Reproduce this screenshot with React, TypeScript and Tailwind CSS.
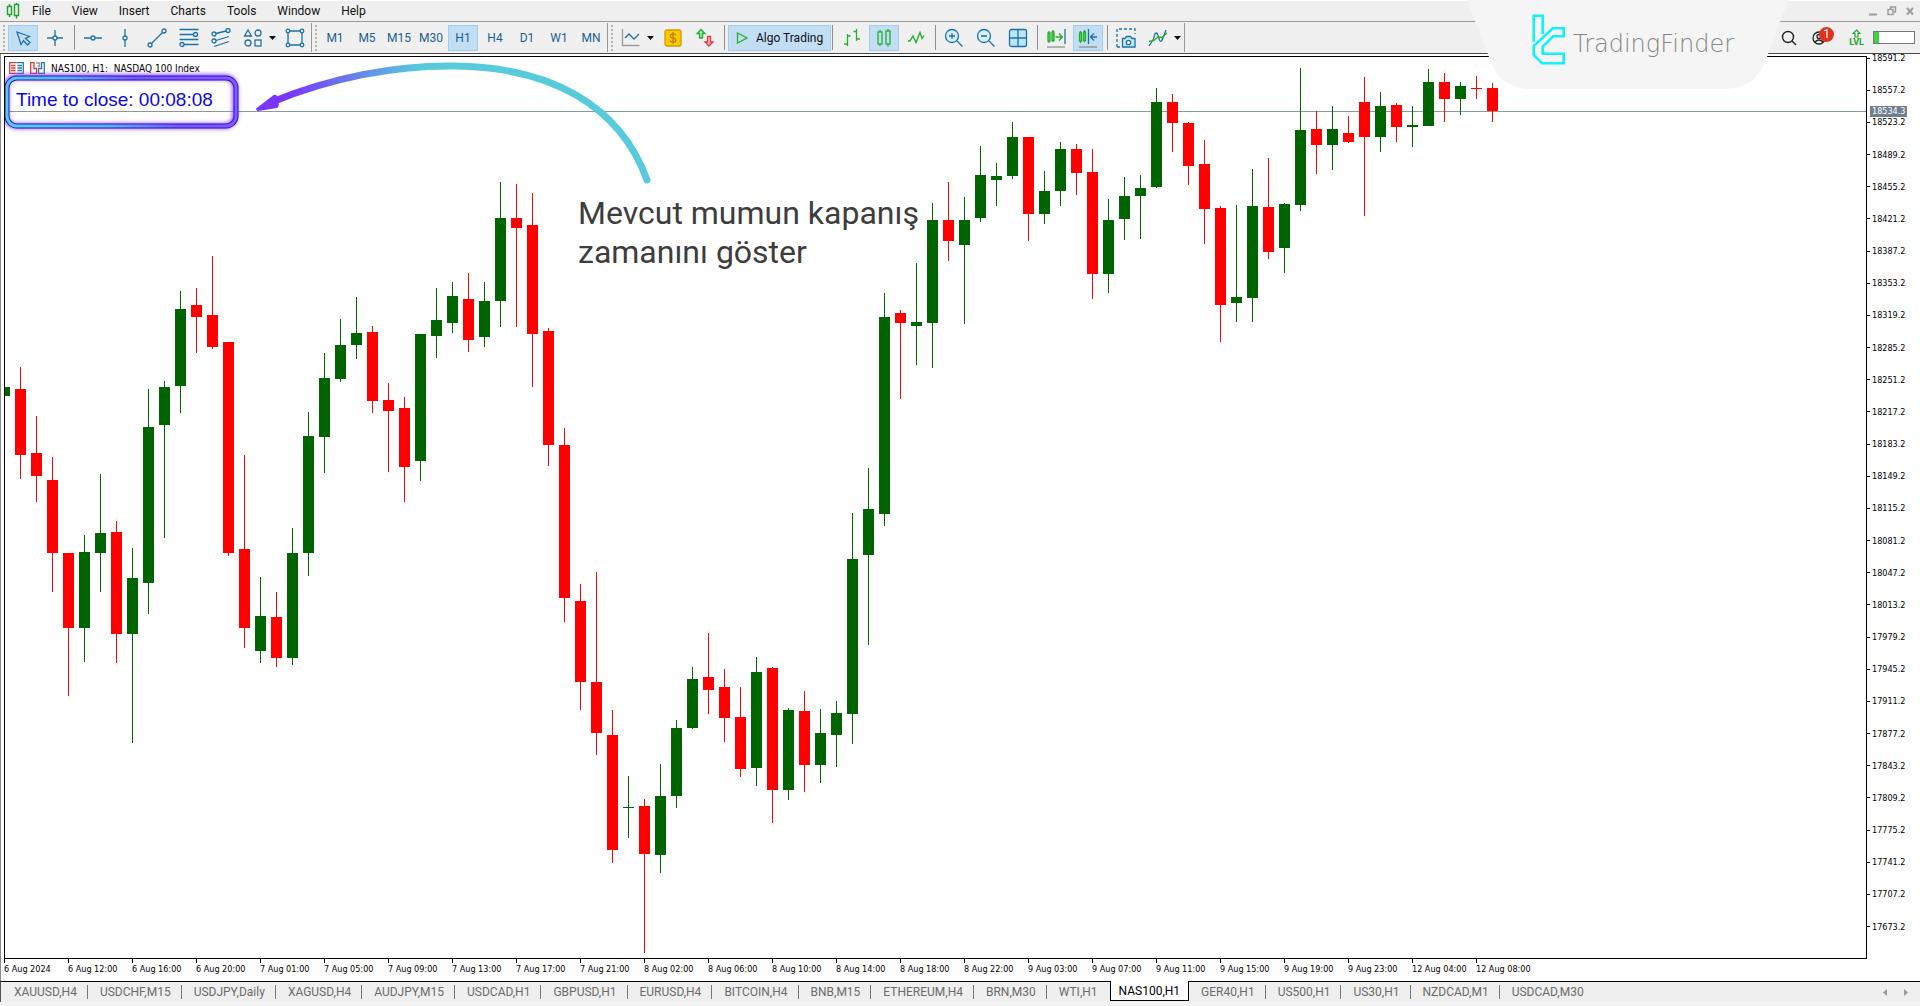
import React, { useState } from 'react';
import clsx from 'clsx';

type Candle = [number, number, number, number, 'up' | 'down'];

// [high, body top, body bottom, low, direction]
const candles: Candle[] = [
  [387, 387, 396, 396, 'up'],
  [367, 389, 455, 479, 'down'],
  [416, 453, 476, 502, 'down'],
  [457, 480, 553, 592, 'down'],
  [553, 553, 628, 696, 'down'],
  [535, 552, 628, 662, 'up'],
  [474, 533, 553, 592, 'up'],
  [521, 532, 634, 663, 'down'],
  [548, 578, 634, 743, 'up'],
  [389, 427, 583, 614, 'up'],
  [381, 387, 425, 538, 'up'],
  [291, 309, 386, 413, 'up'],
  [288, 305, 317, 353, 'down'],
  [256, 315, 347, 349, 'down'],
  [342, 342, 553, 556, 'down'],
  [455, 549, 628, 648, 'down'],
  [577, 616, 651, 663, 'up'],
  [592, 617, 658, 667, 'down'],
  [528, 553, 658, 665, 'up'],
  [412, 436, 553, 576, 'up'],
  [353, 378, 437, 473, 'up'],
  [319, 345, 379, 382, 'up'],
  [297, 333, 345, 359, 'up'],
  [326, 332, 401, 413, 'down'],
  [383, 400, 411, 472, 'down'],
  [397, 408, 467, 502, 'down'],
  [334, 334, 461, 481, 'up'],
  [288, 320, 336, 358, 'up'],
  [282, 296, 323, 333, 'up'],
  [273, 299, 340, 352, 'down'],
  [282, 301, 337, 347, 'up'],
  [182, 218, 301, 327, 'up'],
  [184, 218, 228, 327, 'down'],
  [193, 225, 334, 387, 'down'],
  [328, 331, 445, 466, 'down'],
  [428, 445, 598, 622, 'down'],
  [584, 601, 682, 710, 'down'],
  [572, 682, 733, 755, 'down'],
  [710, 735, 850, 863, 'down'],
  [776, 807, 808, 838, 'up'],
  [799, 806, 854, 953, 'down'],
  [764, 796, 855, 873, 'up'],
  [720, 728, 796, 808, 'up'],
  [667, 679, 728, 729, 'up'],
  [633, 677, 690, 714, 'down'],
  [669, 687, 718, 742, 'down'],
  [687, 717, 769, 777, 'down'],
  [657, 672, 768, 786, 'up'],
  [667, 668, 790, 823, 'down'],
  [708, 710, 790, 800, 'up'],
  [691, 711, 765, 792, 'down'],
  [709, 733, 765, 783, 'up'],
  [701, 713, 735, 767, 'up'],
  [513, 559, 714, 744, 'up'],
  [468, 509, 555, 645, 'up'],
  [293, 317, 514, 526, 'up'],
  [310, 313, 323, 399, 'down'],
  [263, 322, 326, 365, 'up'],
  [203, 220, 323, 368, 'up'],
  [182, 220, 241, 261, 'down'],
  [197, 220, 245, 324, 'up'],
  [146, 175, 218, 222, 'up'],
  [163, 176, 180, 206, 'up'],
  [122, 137, 176, 179, 'up'],
  [137, 137, 214, 241, 'down'],
  [171, 191, 214, 224, 'up'],
  [142, 149, 191, 206, 'up'],
  [144, 149, 173, 195, 'down'],
  [149, 172, 274, 299, 'down'],
  [199, 220, 274, 293, 'up'],
  [177, 196, 219, 240, 'up'],
  [175, 188, 196, 239, 'up'],
  [88, 102, 187, 188, 'up'],
  [94, 102, 123, 152, 'down'],
  [122, 123, 166, 185, 'down'],
  [140, 164, 209, 244, 'down'],
  [206, 208, 305, 342, 'down'],
  [205, 297, 303, 322, 'up'],
  [169, 206, 298, 322, 'up'],
  [158, 207, 252, 259, 'down'],
  [203, 204, 248, 273, 'up'],
  [68, 130, 205, 211, 'up'],
  [111, 129, 145, 174, 'down'],
  [106, 129, 145, 170, 'up'],
  [116, 133, 142, 143, 'down'],
  [77, 102, 137, 216, 'down'],
  [92, 106, 137, 152, 'up'],
  [103, 105, 127, 142, 'down'],
  [106, 125, 127, 147, 'up'],
  [69, 82, 126, 126, 'up'],
  [73, 82, 99, 122, 'down'],
  [82, 86, 99, 115, 'up'],
  [76, 88, 89, 99, 'down'],
  [83, 88, 111, 122, 'down'],
];

const CANDLE_STEP = 16;

const prices = Array.from({ length: 28 }, (_, i) => (18591.2 - i * 34).toFixed(1));

const times = [
  '6 Aug 2024', '6 Aug 12:00', '6 Aug 16:00', '6 Aug 20:00',
  '7 Aug 01:00', '7 Aug 05:00', '7 Aug 09:00', '7 Aug 13:00', '7 Aug 17:00', '7 Aug 21:00',
  '8 Aug 02:00', '8 Aug 06:00', '8 Aug 10:00', '8 Aug 14:00', '8 Aug 18:00', '8 Aug 22:00',
  '9 Aug 03:00', '9 Aug 07:00', '9 Aug 11:00', '9 Aug 15:00', '9 Aug 19:00', '9 Aug 23:00',
  '12 Aug 04:00', '12 Aug 08:00',
];

const menus = ['File', 'View', 'Insert', 'Charts', 'Tools', 'Window', 'Help'];
const timeframes = ['M1', 'M5', 'M15', 'M30', 'H1', 'H4', 'D1', 'W1', 'MN'];

const symbols = [
  'XAUUSD,H4', 'USDCHF,M15', 'USDJPY,Daily', 'XAGUSD,H4', 'AUDJPY,M15', 'USDCAD,H1', 'GBPUSD,H1',
  'EURUSD,H4', 'BITCOIN,H4', 'BNB,M15', 'ETHEREUM,H4', 'BRN,M30', 'WTI,H1', 'NAS100,H1',
  'GER40,H1', 'US500,H1', 'US30,H1', 'NZDCAD,M1', 'USDCAD,M30',
];

const BLUE = '#1d71a8';
const GREEN = '#22b02e';

const Icon: React.FC<{ children: React.ReactNode; color?: string }> = ({ children, color = BLUE }) => (
  <svg width="20" height="20" viewBox="0 0 20 20" fill="none" stroke={color} strokeWidth="1.3" aria-hidden="true">
    {children}
  </svg>
);

const Tool: React.FC<{ label: string; active?: boolean; children: React.ReactNode }> = ({ label, active, children }) => (
  <button
    type="button"
    aria-label={label}
    className={clsx(
      'mx-px flex h-[26px] w-[30px] shrink-0 items-center justify-center border',
      active ? 'border-[#a5cdee] bg-[#c2def5]' : 'border-transparent hover:bg-[#dcebf8]'
    )}
  >
    {children}
  </button>
);

const Caret = ({ label }: { label: string }) => (
  <button type="button" aria-label={label} className="flex h-[26px] w-[10px] shrink-0 items-center">
    <svg width="8" height="4" viewBox="0 0 8 4" aria-hidden="true">
      <path d="M0 0H7L3.5 4Z" fill="#111" />
    </svg>
  </button>
);

const Separator = () => (
  <span className="flex w-[6px] shrink-0 justify-center">
    <span className="h-[25px] w-px bg-[#8f8f8f]" />
  </span>
);

const Grip = () => (
  <span className="flex h-full w-[7px] shrink-0 items-center justify-center">
    <span className="h-[26px] border-l-2 border-dotted border-[#b5b5b5]" />
  </span>
);

const MenuBar = () => (
  <header className="flex h-[22px] items-center border-t border-b border-t-white border-b-[#9b9b9b] bg-[#efefef] pl-[6px] text-[12px] text-[#111]">
    <svg width="14" height="16" viewBox="0 0 14 16" fill="none" stroke="#17a62b" strokeWidth="1.4" aria-hidden="true">
      <path d="M3.5 1v2.500M3.500 11.500v2.500M10.500 0v1.500M10.500 12.500v3" />
      <rect x="1.500" y="3.500" width="4" height="8" />
      <rect x="8.500" y="1.500" width="4" height="11" />
    </svg>
    <nav className="ml-[2px] flex flex-1 gap-px">
      {menus.map((menu) => (
        <button key={menu} type="button" className="px-[10px] leading-[16px]">
          {menu}
        </button>
      ))}
    </nav>
    <div className="flex items-center gap-[9px] pr-[6px] text-[#9c9c9c]">
      <button type="button" aria-label="Minimize">
        <svg width="10" height="10" viewBox="0 0 10 10"><path d="M1 8.500H9" stroke="currentColor" strokeWidth="2" /></svg>
      </button>
      <button type="button" aria-label="Restore">
        <svg width="10" height="10" viewBox="0 0 10 10" fill="none" stroke="currentColor" strokeWidth="1.400">
          <rect x="1" y="3.500" width="5" height="5" />
          <path d="M3.500 3V1H8.500V6H6.500" />
        </svg>
      </button>
      <button type="button" aria-label="Close">
        <svg width="8" height="10" viewBox="0 0 8 10"><path d="M1 2l6 6.500M7 2L1 8.500" stroke="currentColor" strokeWidth="2" /></svg>
      </button>
    </div>
  </header>
);

const Toolbar = () => {
  const [timeframe, setTimeframe] = useState('H1');

  return (
    <div className="flex h-[32px] items-center border-b border-[#4a4a4a] bg-[#f0f0f0] text-[12px]">
      <Grip />
      <Tool label="Cursor" active>
        <Icon><path d="M4 4L8 16.500L10.500 12.500L14.500 17L17 14.500L12.500 10.500L16.500 8.500Z" /></Icon>
      </Tool>
      <Tool label="Crosshair">
        <Icon><path d="M10 2V8M10 12V18M2 10H8M12 10H18" /><circle cx="10" cy="10" r="2" /></Icon>
      </Tool>
      <Separator />
      <Tool label="Horizontal line">
        <Icon><path d="M1 10H8M12 10H19" /><circle cx="10" cy="10" r="2" /></Icon>
      </Tool>
      <Tool label="Vertical line">
        <Icon><path d="M10 1V8M10 12V19" /><circle cx="10" cy="10" r="2" /></Icon>
      </Tool>
      <Tool label="Trendline">
        <Icon><path d="M4.500 15.500L15.500 4.500" /><circle cx="3" cy="17" r="2" /><circle cx="17" cy="3" r="2" /></Icon>
      </Tool>
      <Tool label="Fibonacci retracement">
        <Icon>
          <path d="M0.500 1.500H19.500M0.500 6.500H14M0.500 11.500H19.500M5 16.500H19.500" />
          <circle cx="16.500" cy="6.500" r="2" /><circle cx="3" cy="16.500" r="2" />
        </Icon>
      </Tool>
      <Tool label="Equidistant channel">
        <Icon>
          <path d="M5 5.500L15 3M5 12.500L18 8.500M3 18.500L18 13.500" />
          <circle cx="3" cy="6" r="2" /><circle cx="17" cy="2.500" r="2" /><circle cx="3" cy="13" r="2" />
        </Icon>
      </Tool>
      <Tool label="Shapes">
        <Icon>
          <path d="M5 2L8.500 8H1.500Z" />
          <circle cx="15" cy="5" r="3" /><circle cx="5" cy="15" r="3" />
          <rect x="12" y="12" width="6" height="6" />
        </Icon>
      </Tool>
      <Caret label="More shapes" />
      <Tool label="Rectangle">
        <Icon>
          <path d="M4.500 3H15.500M4.500 17H15.500M3 4.500V15.500M17 4.500V15.500" />
          <circle cx="3" cy="3" r="1.800" /><circle cx="17" cy="3" r="1.800" />
          <circle cx="3" cy="17" r="1.800" /><circle cx="17" cy="17" r="1.800" />
        </Icon>
      </Tool>
      <span className="h-[29px] w-px bg-[#9a9a9a]" />
      <Grip />

      {timeframes.map((tf) => (
        <button
          key={tf}
          type="button"
          onClick={() => setTimeframe(tf)}
          className={clsx(
            'mx-px flex h-[26px] w-[30px] shrink-0 items-center justify-center border text-[#1b6192]',
            tf === timeframe ? 'border-[#a5cdee] bg-[#c2def5]' : 'border-transparent'
          )}
        >
          {tf}
        </button>
      ))}
      <span className="h-[29px] w-px bg-[#9a9a9a]" />
      <Grip />

      <Tool label="Chart type">
        <Icon>
          <path d="M1.500 1V17.500H18.500" stroke="#9c9c9c" />
          <path d="M4 10L8 6L13 11L18 6" />
        </Icon>
      </Tool>
      <Caret label="More chart types" />
      <Tool label="One click trading">
        <svg width="18" height="18" viewBox="0 0 18 18" aria-hidden="true">
          <rect x="1" y="1" width="16" height="16" rx="2" fill="#ffc700" stroke="#d19c00" strokeWidth="1.300" />
          <path d="M9 3V15M12 6Q11 4.800 9 4.800Q6.300 4.800 6.300 6.800Q6.300 8.600 9 9Q11.800 9.400 11.800 11.200Q11.800 13.200 9 13.200Q7 13.200 6 12" fill="none" stroke="#b98300" strokeWidth="1.300" />
        </svg>
      </Tool>
      <Tool label="Depth of market">
        <Icon>
          <path d="M6 1.500L10 5.500H7.500V10H4.500V5.500H2Z" stroke={GREEN} fill="#a8e6ad" />
          <path d="M14 18L10 14H12.500V8.500H15.500V14H18Z" stroke="#dc3b45" fill="#f7b5b9" />
        </Icon>
      </Tool>
      <Separator />
      <button
        type="button"
        className="mx-px flex h-[26px] items-center gap-[8px] border border-[#a5cdee] bg-[#c2def5] px-[7px] text-[#111]"
      >
        <svg width="12" height="12" viewBox="0 0 12 12" fill="none" stroke={GREEN} strokeWidth="1.300" aria-hidden="true">
          <path d="M1.500 1L11 6L1.500 11Z" />
        </svg>
        Algo Trading
      </button>
      <span className="h-[25px] w-px bg-[#8f8f8f]" />
      <span className="w-[3px]" />
      <Tool label="Bar chart">
        <Icon color={GREEN}><path d="M5.500 6V18M2 16H5.500M5.500 8H8.500M14.500 1V13M11.500 3.500H14.500M14.500 11H18" /></Icon>
      </Tool>
      <Tool label="Candlesticks" active>
        <Icon color={GREEN}>
          <path d="M6 2V4M6 16V18M14 1V3M14 16V18.500" />
          <rect x="4" y="4" width="4" height="12" /><rect x="12" y="3" width="4" height="13" />
        </Icon>
      </Tool>
      <Tool label="Line chart">
        <Icon color={GREEN}><path d="M2 13H4L7 8L10 14.500L14 4.500L16 10.500L18 7.500" /></Icon>
      </Tool>
      <Separator />
      <Tool label="Zoom in">
        <Icon><circle cx="8" cy="8" r="6.500" fill="#d9f0fb" /><path d="M13 13L18.500 18.500M5 8H11M8 5V11" /></Icon>
      </Tool>
      <Tool label="Zoom out">
        <Icon><circle cx="8" cy="8" r="6.500" fill="#d9f0fb" /><path d="M13 13L18.500 18.500M5 8H11" /></Icon>
      </Tool>
      <Tool label="Tile windows">
        <Icon><rect x="1.500" y="1.500" width="17" height="17" rx="2" fill="#b9e6fb" /><path d="M10 1.500V18.500M1.500 10H18.500" /></Icon>
      </Tool>
      <Separator />
      <Tool label="Shift chart">
        <Icon>
          <path d="M3 3V15M7 2V14" stroke={GREEN} />
          <path d="M2 5H4V13H2ZM6 4H8V12.500H6Z" stroke={GREEN} fill="#5fd56c" />
          <path d="M9.500 9H16M13 5.500L16.500 9L13 12.500" stroke={GREEN} />
          <path d="M19 1V16" />
          <path d="M1 19H19" stroke="#8f8f8f" />
        </Icon>
      </Tool>
      <Tool label="Auto scroll" active>
        <Icon>
          <path d="M2.500 3V15M6.500 2V14" stroke={GREEN} />
          <path d="M1.500 5H3.500V13H1.500ZM5.500 4H7.500V12.500H5.500Z" stroke={GREEN} fill="#5fd56c" />
          <path d="M10.500 1V16M19 9H13M16 5.500L12.500 9L16 12.500" />
          <path d="M1 19H19" stroke="#8f8f8f" />
        </Icon>
      </Tool>
      <Separator />
      <Tool label="Screenshot">
        <Icon>
          <path d="M1 19V1H19V6M1 19H5" strokeDasharray="3 2" />
          <path d="M6.500 10.500H9L10.500 8.500H14.500L16 10.500H19V19H6.500Z" fill="#c5e8fa" />
          <circle cx="12.500" cy="14.500" r="2.200" fill="#fff" />
        </Icon>
      </Tool>
      <Tool label="Indicators">
        <Icon>
          <path d="M1 18L5 12L7 6Q8 4 9.500 6L11.500 12Q13 15 14.500 11L18 2" />
          <path d="M1 13.500L6 12.500L10 9L14 9.500L19 5" stroke={GREEN} />
        </Icon>
      </Tool>
      <Caret label="More indicators" />
      <span className="h-[29px] w-px bg-[#9a9a9a]" />

      <div className="ml-auto flex items-center pr-[5px]">
        <button type="button" aria-label="Search" className="mr-[14px]">
          <svg width="18" height="18" viewBox="0 0 18 18" fill="none" stroke="#222" strokeWidth="1.400" aria-hidden="true">
            <circle cx="8" cy="8" r="5.500" /><path d="M12 12L16 16" />
          </svg>
        </button>
        <button type="button" aria-label="Account, 1 notification" className="relative mr-[17px] flex">
          <svg width="20" height="20" viewBox="0 0 20 20" fill="none" stroke="#222" strokeWidth="1.300" aria-hidden="true">
            <circle cx="7" cy="10" r="6" /><circle cx="7" cy="8.500" r="2" /><path d="M3 14Q7 10 11 14" />
          </svg>
          <span className="absolute -top-[1px] left-[7px] flex size-[15px] items-center justify-center rounded-full bg-[#e0321f] text-[12px] leading-none text-white">
            1
          </span>
        </button>
        <button type="button" className="mr-[9px] flex flex-col items-center text-[9px] leading-[8px] font-bold text-[#22a52e]">
          <svg width="9" height="9" viewBox="0 0 9 9" fill="none" stroke="currentColor" strokeWidth="1.200" aria-hidden="true">
            <path d="M4.500 1L8 4.500H6V8H3V4.500H1Z" />
          </svg>
          LVL
        </button>
        <span className="flex h-[13px] w-[42px] border border-[#777] bg-white">
          <span className="w-[5px] bg-[#3fd13f]" />
        </span>
      </div>
    </div>
  );
};

const BrandBadge = () => (
  <div className="absolute top-0 right-[131px] h-[89px] w-[322px]">
    <svg className="absolute inset-0" width="322" height="89" viewBox="0 0 322 89" aria-hidden="true">
      <path d="M0 0C7 18 13 34 22 57C30 78 40 89 66 89H256C282 89 292 78 300 57C308 34 314 18 322 0Z" fill="#f5f5f5" />
    </svg>
    <div className="relative flex h-full items-start gap-[8px] pt-[14px] pl-[65px]">
      <svg width="33" height="52" viewBox="0 0 33 52" fill="none" stroke="#12f2f7" strokeWidth="2.600" aria-hidden="true">
        <path d="M1.700 28V1.700H10.700V20" />
        <path d="M20.700 14.300H31.700V22.300H21L10.700 32.500V39.700H31.700V49.300H10L1.700 41V32Z" />
      </svg>
      <span className="pt-[15px] font-['DejaVu_Sans',sans-serif] text-[24px] leading-[30px] font-extralight text-[#858585]">
        TradingFinder
      </span>
    </div>
  </div>
);

const CandleSeries = () => (
  <svg className="absolute inset-0 h-full w-full" shapeRendering="crispEdges" aria-label="NAS100 hourly candles">
    <rect x="0" y="54" width="100%" height="1" fill="#869a9f" />
    <g transform="translate(-5 -57)">
      {candles.map(([high, top, bottom, low, direction], i) => {
        const x = 4 + i * CANDLE_STEP;
        const fill = direction === 'up' ? '#006400' : '#ff0000';
        return (
          <g key={i} fill={fill}>
            <rect x={x} y={high} width="1" height={low - high} />
            <rect x={x - 5} y={top} width="11" height={bottom - top} />
          </g>
        );
      })}
    </g>
  </svg>
);

const ClosePointer = () => (
  <svg className="absolute top-0 left-0" width="680" height="140" viewBox="5 57 680 140" fill="none" aria-hidden="true">
    <defs>
      <linearGradient id="pointer" gradientUnits="userSpaceOnUse" x1="256" y1="0" x2="420" y2="0">
        <stop offset="0.2" stopColor="#7a35ff" />
        <stop offset="0.5" stopColor="#6a70ee" />
        <stop offset="1" stopColor="#57cbdc" />
      </linearGradient>
    </defs>
    <path d="M272 102C330 78 395 65 455 66C550 67 620 105 647 180" stroke="url(#pointer)" strokeWidth="7" strokeLinecap="round" />
    <path d="M257 109L274 96Q277 95 276 100Q279 104 277 107L258 110Z" fill="#7a35ff" stroke="#7a35ff" strokeWidth="2" strokeLinejoin="round" />
  </svg>
);

const CountdownBox = () => (
  <div className="absolute top-[14px] -left-[5px] h-[62px] w-[244px]">
    <svg className="absolute inset-0" width="244" height="62" viewBox="0 0 244 62" fill="none" aria-hidden="true">
      <defs>
        <linearGradient id="frame" x1="0" y1="0.6" x2="1" y2="0.4">
          <stop offset="0" stopColor="#52cfe6" />
          <stop offset="0.35" stopColor="#58b4ea" />
          <stop offset="0.65" stopColor="#7458f2" />
          <stop offset="1" stopColor="#8a55ff" />
        </linearGradient>
        <filter id="glow" x="-10%" y="-30%" width="120%" height="160%">
          <feGaussianBlur stdDeviation="2" />
        </filter>
      </defs>
      <rect x="6" y="6" width="229" height="49" rx="10" stroke="#8a3dff" strokeWidth="5" filter="url(#glow)" />
      <rect x="7" y="7" width="229" height="48" rx="10" stroke="#2a16c8" strokeWidth="5" />
      <rect x="7" y="7" width="229" height="48" rx="10" stroke="url(#frame)" strokeWidth="3" />
    </svg>
    <p className="relative pt-[17px] pl-[16px] font-['Liberation_Sans',Arial,sans-serif] text-[19px] leading-[24px] text-[#0a0adf]">
      Time to close: 00:08:08
    </p>
  </div>
);

const Chart = () => (
  <main className="flex flex-1 border-l border-[#8a8a8a] bg-white pl-[3px]">
    <div className="flex min-w-0 flex-1 flex-col pt-[2px]">
      <section className="relative flex-1 overflow-hidden border border-black">
        <CandleSeries />
        <div className="relative flex h-[22px] items-center gap-[6px] pl-[4px] font-['DejaVu_Sans_Condensed','DejaVu_Sans',sans-serif] text-[10px] text-black">
          <svg width="15" height="12" viewBox="0 0 15 12" fill="none" strokeWidth="1.300" aria-hidden="true">
            <path d="M7.500 0.700H0.700V11.300H7.500M2 3.500H6.500M2 6H6.500M2 8.500H6.500" stroke="#d0403c" />
            <path d="M7.500 0.700H14.300V11.300H7.500M8.500 3.500H13M8.500 6H13M8.500 8.500H13" stroke="#2f76a8" />
          </svg>
          <svg width="15" height="12" viewBox="0 0 15 12" fill="none" strokeWidth="1.300" aria-hidden="true">
            <path d="M0.700 0.700H4V6.500H6.500V11.300H0.700Z" stroke="#d0403c" />
            <path d="M14.300 0.700H11.500V6.500H8.500V11.300H14.300Z" stroke="#2f76a8" />
            <path d="M6 1H9.500V4H7.500" stroke="#999" />
          </svg>
          <h1 className="whitespace-pre">NAS100, H1:  NASDAQ 100 Index</h1>
        </div>
        <CountdownBox />
        <ClosePointer />
        <p className="absolute top-[137px] left-[573px] w-[352px] text-[32px] leading-[39px] text-[#3d3d3d]">
          Mevcut mumun kapanış zamanını göster
        </p>
      </section>
      <ol className="flex h-[22px] overflow-hidden font-['DejaVu_Sans_Condensed','DejaVu_Sans',sans-serif] text-[9px] leading-[12px] text-black">
        {times.map((time) => (
          <li key={time} className="w-16 shrink-0 whitespace-nowrap">
            <span className="block h-[4px] w-px bg-black" />
            {time}
          </li>
        ))}
      </ol>
    </div>
    <aside className="relative w-[53px] font-['DejaVu_Sans_Condensed','DejaVu_Sans',sans-serif] text-[9px] text-black">
      <ol className="flex h-full flex-col justify-between pb-[50px]">
        {prices.map((price) => (
          <li key={price} className="flex h-[8px] items-center gap-[2px] leading-[8px]">
            <span className="h-px w-[3px] bg-black" />
            {price}
          </li>
        ))}
      </ol>
      <span className="absolute top-[52px] left-[3px] bg-[#708090] px-[2px] leading-[11px] text-white">18534.3</span>
    </aside>
  </main>
);

const SymbolTabs = () => {
  const [current, setCurrent] = useState('NAS100,H1');
  const currentIndex = symbols.indexOf(current);

  return (
    <footer className="border-b-4 border-[#f3f3f3] bg-[#efefef]">
      <div className="flex h-[21px] items-start border-t border-l border-t-black border-l-[#555] text-[12px] text-[#6b6b6b]">
        <div role="tablist" className="flex flex-1 gap-px pl-[2px]">
          {symbols.map((symbol, i) => {
            const selected = symbol === current;
            const divider = !selected && i !== currentIndex - 1 && i !== symbols.length - 1;
            return (
              <button
                key={symbol}
                type="button"
                role="tab"
                aria-selected={selected}
                onClick={() => setCurrent(symbol)}
                className={clsx(
                  'relative shrink-0',
                  selected
                    ? '-mt-px h-[20px] border-x border-b border-black bg-white px-[8px] leading-[20px] text-black'
                    : 'h-[20px] px-[11px] leading-[21px]'
                )}
              >
                {symbol}
                {divider && <span className="absolute top-[3px] right-0 h-[14px] w-px bg-[#777]" />}
              </button>
            );
          })}
        </div>
        <div className="flex h-[20px] items-center gap-[17px] pr-[12px]">
          <button type="button" aria-label="Scroll tabs left">
            <svg width="4" height="7" viewBox="0 0 4 7"><path d="M4 0V7L0 3.500Z" fill="#9a9a9a" /></svg>
          </button>
          <button type="button" aria-label="Scroll tabs right">
            <svg width="4" height="7" viewBox="0 0 4 7"><path d="M0 0V7L4 3.500Z" fill="#9a9a9a" /></svg>
          </button>
        </div>
      </div>
    </footer>
  );
};

export default function App() {
  return (
    <div className="relative flex min-h-screen flex-col overflow-hidden bg-white font-['Roboto',sans-serif]">
      <MenuBar />
      <Toolbar />
      <Chart />
      <SymbolTabs />
      <BrandBadge />
    </div>
  );
}
